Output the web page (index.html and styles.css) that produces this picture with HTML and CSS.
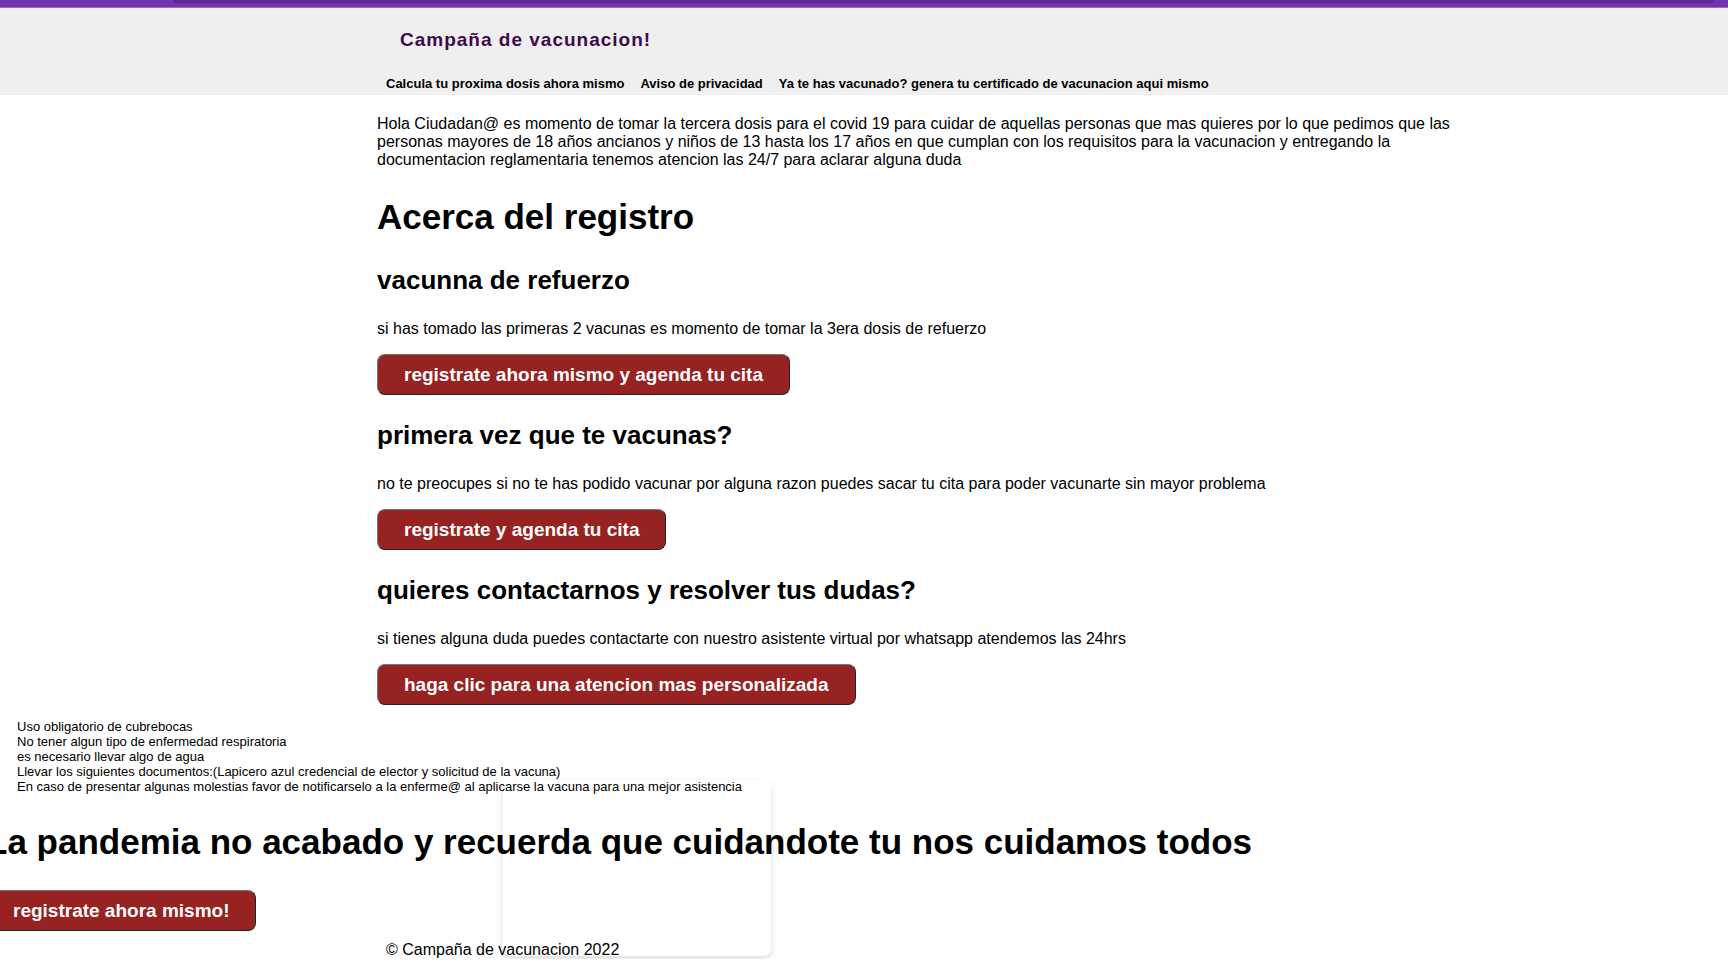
FILE: index.html
```html
<!DOCTYPE html>
<html lang="es">
<head>
<meta charset="utf-8">
<title>Campaña de vacunacion</title>
<link rel="stylesheet" href="styles.css">
</head>
<body>
<div class="topbar"><div class="topbar-field"></div></div>
<header class="header">
  <a class="brand" href="#">Campaña de vacunacion!</a>
  <nav class="nav">
    <a href="#">Calcula tu proxima dosis ahora mismo</a>
    <a href="#">Aviso de privacidad</a>
    <a href="#">Ya te has vacunado? genera tu certificado de vacunacion aqui mismo</a>
  </nav>
</header>
<main>
  <div class="content">
    <p class="text">Hola Ciudadan@ es momento de tomar la tercera dosis para el covid 19 para cuidar de aquellas personas que mas quieres por lo que pedimos que las personas mayores de 18 años ancianos y niños de 13 hasta los 17 años en que cumplan con los requisitos para la vacunacion y entregando la documentacion reglamentaria tenemos atencion las 24/7 para aclarar alguna duda</p>
    <h1 class="title">Acerca del registro</h1>
    <section class="option">
      <h2 class="subtitle">vacunna de refuerzo</h2>
      <p class="text">si has tomado las primeras 2 vacunas es momento de tomar la 3era dosis de refuerzo</p>
      <button class="button" type="button">registrate ahora mismo y agenda tu cita</button>
    </section>
    <section class="option">
      <h2 class="subtitle">primera vez que te vacunas?</h2>
      <p class="text">no te preocupes si no te has podido vacunar por alguna razon puedes sacar tu cita para poder vacunarte sin mayor problema</p>
      <button class="button" type="button">registrate y agenda tu cita</button>
    </section>
    <section class="option">
      <h2 class="subtitle">quieres contactarnos y resolver tus dudas?</h2>
      <p class="text">si tienes alguna duda puedes contactarte con nuestro asistente virtual por whatsapp atendemos las 24hrs</p>
      <button class="button" type="button">haga clic para una atencion mas personalizada</button>
    </section>
  </div>
  <ul class="rules">
    <li>Uso obligatorio de cubrebocas</li>
    <li>No tener algun tipo de enfermedad respiratoria</li>
    <li>es necesario llevar algo de agua</li>
    <li>Llevar los siguientes documentos:(Lapicero azul credencial de elector y solicitud de la vacuna)</li>
    <li>En caso de presentar algunas molestias favor de notificarselo a la enferme@ al aplicarse la vacuna para una mejor asistencia</li>
  </ul>
  <section class="closing">
    <div class="card"></div>
    <h1 class="title">La pandemia no acabado y recuerda que cuidandote tu nos cuidamos todos</h1>
    <button class="button" type="button">registrate ahora mismo!</button>
  </section>
</main>
<footer class="footer">© Campaña de vacunacion 2022</footer>
</body>
</html>
```

FILE: styles.css
```css
* {
  box-sizing: border-box;
}

body {
  margin: 0;
  overflow-x: hidden;
  background: #fff;
  color: #000;
  font: 16px/18px "Liberation Sans", Arial, sans-serif;
}

.topbar {
  height: 8px;
  padding: 0 14px 0 157px;
  background: #7134ae;
  border-bottom: 1px solid #9a66c9;
}

.topbar {
  padding-left: 173px;
}

.topbar-field {
  height: 3px;
  background: #5b2a8c;
  border-radius: 0 0 3px 3px;
}

.header {
  display: flex;
  flex-direction: column;
  align-items: flex-start;
  gap: 22px;
  padding: 20px 0 2px 386px;
  background: #efefef;
}

.brand {
  padding-left: 14px;
  color: #3d0a4f;
  font-size: 19px;
  line-height: 24px;
  font-weight: bold;
  letter-spacing: 1px;
  text-decoration: none;
}

.nav {
  display: flex;
  gap: 16px;
  font-size: 13px;
  line-height: 19px;
  font-weight: bold;
}

.nav a {
  color: #000;
  text-decoration: none;
}

.content {
  padding: 20px 240px 0 377px;
}

.text {
  margin: 0;
}

.title {
  margin: 0;
  font-size: 35px;
  line-height: 40px;
}

.content .title {
  margin-top: 28px;
}

.option {
  margin-top: 24px;
}

.title + .option {
  margin-top: 27px;
}

.subtitle {
  margin: 0 0 24px;
  font-size: 26px;
  line-height: 32px;
}

.option .button {
  margin-top: 16px;
}

.button {
  display: block;
  height: 41px;
  padding: 0 26px;
  border: 1px solid;
  border-color: #767676 #222 #222 #767676;
  border-radius: 8px;
  background: #962222;
  color: #fff;
  font: bold 19px/24px "Liberation Sans", Arial, sans-serif;
}

.rules {
  margin: 14px 0 0;
  padding: 0 0 0 17px;
  list-style: none;
  font-size: 13px;
  line-height: 15px;
}

.closing {
  position: relative;
  margin: 28px 0 0 -14px;
}

.closing .button {
  margin-top: 28px;
}

.card {
  position: absolute;
  z-index: -1;
  top: -42px;
  left: 517px;
  width: 268px;
  height: 176px;
  border-radius: 8px;
  box-shadow: 0 3px 6px rgba(0, 0, 0, 0.14);
}

.footer {
  padding: 10px 0 0 386px;
}
```
